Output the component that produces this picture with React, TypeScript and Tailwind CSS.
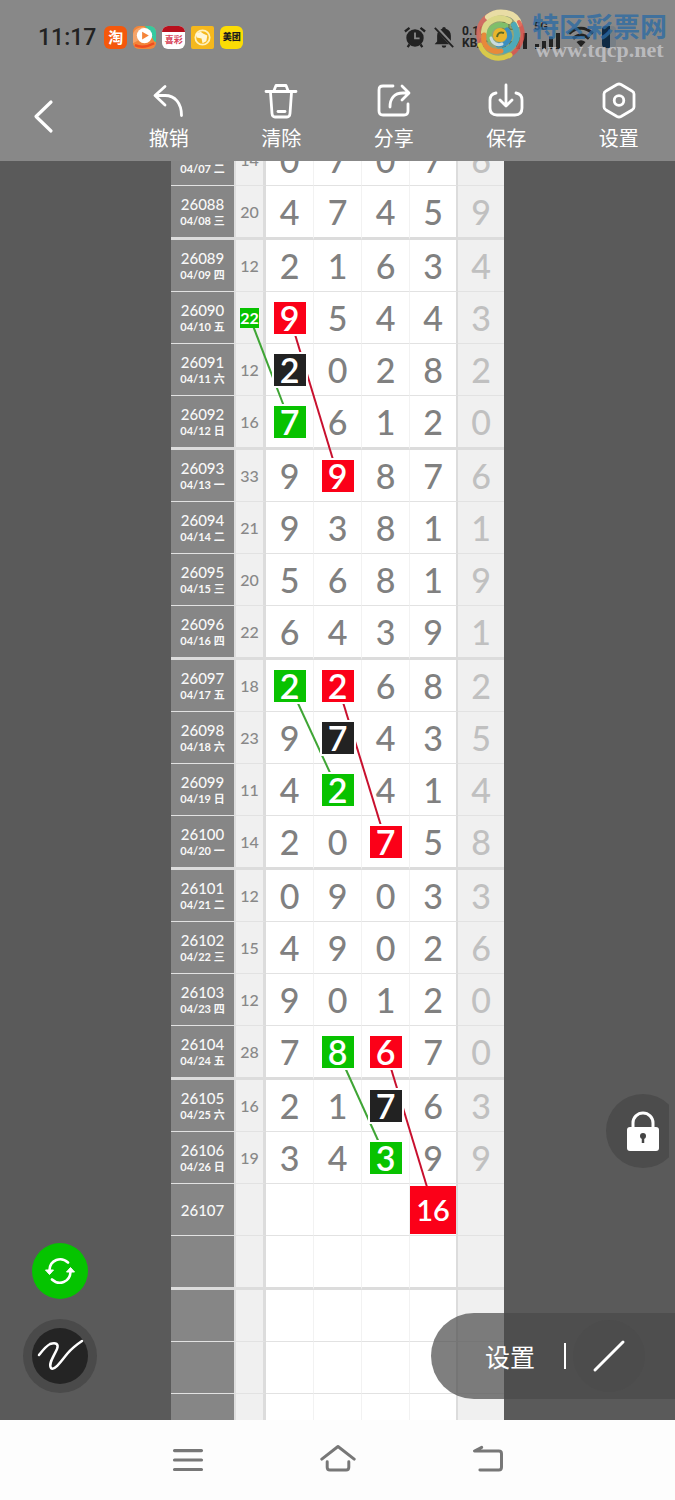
import type { ReactNode } from 'react'

type MarkColor = 'red' | 'green' | 'black'

interface Draw {
  issue: string
  date?: string
  sum?: string
  digits: string
}

const DRAWS: Draw[] = [
  { issue: '26087', date: '04/07 二', sum: '14', digits: '07076' },
  { issue: '26088', date: '04/08 三', sum: '20', digits: '47459' },
  { issue: '26089', date: '04/09 四', sum: '12', digits: '21634' },
  { issue: '26090', date: '04/10 五', sum: '22', digits: '95443' },
  { issue: '26091', date: '04/11 六', sum: '12', digits: '20282' },
  { issue: '26092', date: '04/12 日', sum: '16', digits: '76120' },
  { issue: '26093', date: '04/13 一', sum: '33', digits: '99876' },
  { issue: '26094', date: '04/14 二', sum: '21', digits: '93811' },
  { issue: '26095', date: '04/15 三', sum: '20', digits: '56819' },
  { issue: '26096', date: '04/16 四', sum: '22', digits: '64391' },
  { issue: '26097', date: '04/17 五', sum: '18', digits: '22682' },
  { issue: '26098', date: '04/18 六', sum: '23', digits: '97435' },
  { issue: '26099', date: '04/19 日', sum: '11', digits: '42414' },
  { issue: '26100', date: '04/20 一', sum: '14', digits: '20758' },
  { issue: '26101', date: '04/21 二', sum: '12', digits: '09033' },
  { issue: '26102', date: '04/22 三', sum: '15', digits: '49026' },
  { issue: '26103', date: '04/23 四', sum: '12', digits: '90120' },
  { issue: '26104', date: '04/24 五', sum: '28', digits: '78670' },
  { issue: '26105', date: '04/25 六', sum: '16', digits: '21763' },
  { issue: '26106', date: '04/26 日', sum: '19', digits: '34399' },
  { issue: '26107', digits: '' },
  { issue: '', digits: '' },
  { issue: '', digits: '' },
  { issue: '', digits: '' },
  { issue: '', digits: '' },
]

// key: row-column, column -1 is the sum
const MARKS: Record<string, MarkColor> = {
  '3--1': 'green',
  '3-0': 'red',
  '4-0': 'black',
  '5-0': 'green',
  '6-1': 'red',
  '10-0': 'green',
  '10-1': 'red',
  '11-1': 'black',
  '12-1': 'green',
  '13-2': 'red',
  '17-1': 'green',
  '17-2': 'red',
  '18-2': 'black',
  '19-2': 'green',
}

const MARK_BG: Record<MarkColor, string> = {
  red: 'bg-[#fb0018]',
  green: 'bg-[#08c200]',
  black: 'bg-[#222222]',
}

// [row, column] -> [row, column]
const LINKS: { from: [number, number]; to: [number, number]; color: string }[] = [
  { from: [3, -1], to: [5, 0], color: '#3fa535' },
  { from: [3, 0], to: [6, 1], color: '#c8102e' },
  { from: [10, 0], to: [12, 1], color: '#3fa535' },
  { from: [10, 1], to: [13, 2], color: '#c8102e' },
  { from: [17, 1], to: [19, 2], color: '#3fa535' },
  { from: [17, 2], to: [20, 3], color: '#c8102e' },
]

const isGroupEnd = (row: number) => row % 4 === 1

function centerX(col: number) {
  return col < 0 ? 79 : 119 + col * 48
}

function centerY(row: number) {
  return row * 52 + Math.floor((row + 2) / 4) * 2 + 26
}

function DrawRow({ draw, row }: { draw: Draw; row: number }) {
  const end = isGroupEnd(row)
  const line = end ? 'border-b-3 border-b-[#dcdcdc]' : 'border-b border-b-[#e2e2e2]'
  const sumMark = MARKS[`${row}--1`]

  return (
    <tr className={end ? 'h-[54px]' : 'h-[52px]'}>
      <th
        scope="row"
        className={`border-r-2 border-r-[#dedede] bg-[#868686] p-0 text-center font-medium text-[#f8f8f8] ${line}`}
      >
        <div className="text-[15px] leading-[18px]">{draw.issue}</div>
        {draw.date && <div className="text-[11px] leading-4 font-bold whitespace-nowrap">{draw.date}</div>}
      </th>
      <td
        className={`border-r-3 border-r-[#dcdcdc] bg-[#f0f0f0] p-0 text-center text-base font-medium text-[#888888] ${line}`}
      >
        {sumMark ? (
          <span className={`relative z-10 inline-block h-5 leading-5 font-bold text-white ${MARK_BG[sumMark]}`}>
            {draw.sum}
          </span>
        ) : (
          draw.sum
        )}
      </td>
      {[0, 1, 2, 3].map((col) => {
        const mark = MARKS[`${row}-${col}`]
        const side = col === 3 ? 'border-r-2 border-r-[#dcdcdc]' : 'border-r border-r-[#f2f2f2]'
        return (
          <td
            key={col}
            className={`bg-white p-0 text-center text-[34px] leading-8 font-medium text-[#808080] ${side} ${line}`}
          >
            {row === 20 && col === 3 ? (
              <span className="relative z-10 mx-auto flex h-12 items-center justify-center bg-[#fb0018] text-[29px] font-semibold text-white">
                16
              </span>
            ) : mark ? (
              <span
                className={`relative z-10 mx-auto flex size-8 items-center justify-center font-semibold text-white ring-2 ring-white ${MARK_BG[mark]}`}
              >
                {draw.digits[col]}
              </span>
            ) : (
              draw.digits[col]
            )}
          </td>
        )
      })}
      <td className={`bg-[#f0f0f0] p-0 text-center text-[34px] leading-8 font-medium text-[#c0c0c0] ${line}`}>
        {draw.digits[4]}
      </td>
    </tr>
  )
}

function TrendChart() {
  return (
    <div className="relative mx-auto -mt-[27px] w-[333px] font-['Lato','Noto_Sans_CJK_SC',sans-serif]">
      <table className="w-full table-fixed border-separate border-spacing-0">
        <colgroup>
          <col className="w-[65px]" />
          <col className="w-[30px]" />
          <col className="w-12" />
          <col className="w-12" />
          <col className="w-12" />
          <col className="w-12" />
          <col />
        </colgroup>
        <tbody>
          {DRAWS.map((draw, row) => (
            <DrawRow key={row} draw={draw} row={row} />
          ))}
        </tbody>
      </table>
      <svg className="pointer-events-none absolute inset-0 size-full" aria-hidden="true">
        {LINKS.map(({ from, to, color }) => (
          <line
            key={from.join()}
            x1={centerX(from[1])}
            y1={centerY(from[0])}
            x2={centerX(to[1])}
            y2={centerY(to[0])}
            stroke={color}
            strokeWidth="2"
          />
        ))}
      </svg>
    </div>
  )
}

function Icon({ children, className = 'size-10' }: { children: ReactNode; className?: string }) {
  return (
    <svg
      viewBox="0 0 40 40"
      className={className}
      fill="none"
      stroke="currentColor"
      strokeWidth="2.8"
      strokeLinecap="round"
      strokeLinejoin="round"
      aria-hidden="true"
    >
      {children}
    </svg>
  )
}

const ACTIONS: { label: string; icon: ReactNode }[] = [
  {
    label: '撤销',
    icon: <path d="M16 6.500 L6 15.500 L16 25 M7 15.500 H16 C26 15.500 32.500 23 32.500 35.500" />,
  },
  {
    label: '清除',
    icon: (
      <>
        <path d="M5 11.500 H35 M13 10.500 L15 5.500 H25 L27 10.500 M9.500 12.500 L11 33.500 Q11.300 37 14 37 H26 Q28.700 37 29 33.500 L30.500 12.500" />
        <path d="M17 31.500 H24" />
      </>
    ),
  },
  {
    label: '分享',
    icon: (
      <>
        <path d="M19 6 H9 Q5 6 5 10 V31 Q5 35 9 35 H30 Q34 35 34 31 V24" />
        <path d="M28 6 L35 13 L28 20 M34 13 H29 C20 13 16 19 16 27" />
      </>
    ),
  },
  {
    label: '保存',
    icon: (
      <>
        <path d="M10 13 Q4 14 4 20 V28 Q4 35 11 35 H29 Q36 35 36 28 V20 Q36 14 30 13" />
        <path d="M20 5 V25 M14 20 L20 26 L26 20" />
      </>
    ),
  },
  {
    label: '设置',
    icon: (
      <>
        <path d="M18 4.500 Q20 3.500 22 4.500 L33 11 Q35 12 35 14 V27 Q35 29 33 30 L22 36.500 Q20 37.500 18 36.500 L7 30 Q5 29 5 27 V14 Q5 12 7 11 Z" />
        <circle cx="20" cy="20.500" r="4.800" />
      </>
    ),
  },
]

function AppBadges() {
  return (
    <div className="flex items-center gap-1.5" aria-hidden="true">
      <span className="flex size-[23px] items-center justify-center rounded-md bg-[#f4580c] text-[15px] font-bold text-white">
        淘
      </span>
      <svg viewBox="0 0 24 24" className="size-[23px]">
        <rect width="24" height="24" rx="6" fill="#f2853a" />
        <path d="M12 0h6a6 6 0 0 1 6 6v11c-5-2-3-9-12-17z" fill="#35c9a0" />
        <path d="M0 8C2 2 8 1 12 1L9 13 0 18z" fill="#f6a469" />
        <circle cx="12" cy="10" r="8" fill="#fff" />
        <path d="M9.500 6v8l7-4z" fill="#f5843a" />
        <path d="M2 20q9 4 20-2" stroke="#f04d20" strokeWidth="2.500" fill="none" />
      </svg>
      <span className="flex size-[23px] flex-col overflow-hidden rounded-md bg-white text-center text-[9px] leading-4 font-bold text-[#d8455a]">
        <span className="h-1.5 shrink-0 bg-[#b80f1c]" />
        喜彩
      </span>
      <svg viewBox="0 0 24 24" className="size-[23px]">
        <rect width="24" height="24" rx="2" fill="#f5b81d" />
        <circle cx="12" cy="12" r="7.500" fill="none" stroke="#fff1bd" strokeWidth="1.800" />
        <path d="M5 8l5-2 3 2 4 2-1 6-4 2-1-5-5-1z" fill="#fff7d8" />
      </svg>
      <span className="flex size-[23px] items-center justify-center rounded-md bg-[#fbdc05] text-[9px] font-black whitespace-nowrap text-[#1c1c1c]">
        美团
      </span>
    </div>
  )
}

function Signal() {
  return (
    <div className="relative h-6 w-[26px]">
      <span className="absolute -top-1 left-0 font-['Roboto',sans-serif] text-[11px] leading-3 font-bold">5G</span>
      <svg viewBox="0 0 26 24" className="size-full" fill="currentColor">
        <path d="M1 19h4v5H1zM8 16h4v8H8zM15 12h4v12h-4zM22 8h4v16h-4z" />
      </svg>
    </div>
  )
}

function StatusBar() {
  return (
    <div className="flex h-20 items-center pr-[59px] pb-1.5 pl-[38px] text-[#222222]">
      <span className="mr-2 font-['Roboto',sans-serif] text-[23px] leading-none font-medium">11:17</span>
      <AppBadges />
      <div className="ml-auto flex items-center gap-[7px]">
        <svg viewBox="0 0 24 24" className="size-[22px]" aria-hidden="true">
          <circle cx="12" cy="13" r="9.500" fill="currentColor" />
          <path d="M1 6l5-4M23 6l-5-4M6 20l-2 3M18 20l2 3" stroke="currentColor" strokeWidth="2.500" />
          <path d="M12 7v6.500h5" stroke="#888888" strokeWidth="2" fill="none" />
        </svg>
        <svg viewBox="0 0 24 24" className="size-[22px]" aria-hidden="true">
          <path
            d="M12 1a2 2 0 0 1 2 2c3.500 1 5.500 4 5.500 7.500V17l2.500 2.500v.5H2v-.5L4.500 17v-6.500C4.500 7 6.500 4 10 3a2 2 0 0 1 2-2zM9.500 21.200h5a2.500 2.500 0 0 1-5 0z"
            fill="currentColor"
          />
          <path d="M3 1l20 22" stroke="#888888" strokeWidth="4" />
          <path d="M2 2l20 21" stroke="currentColor" strokeWidth="2" />
        </svg>
        <span className="w-8 font-['Roboto',sans-serif] text-xs leading-3 font-bold">0.10 KB/s</span>
        <Signal />
        <Signal />
        <svg viewBox="0 0 28 22" className="h-[22px] w-7" aria-hidden="true">
          <path d="M2 7.500Q14-3 26 7.500M6 12.500q8-7 16 0" fill="none" stroke="currentColor" strokeWidth="3" />
          <path d="M9.500 16q4.500-3.500 9 0L14 21z" fill="currentColor" />
        </svg>
        <span className="h-[22px] w-3.5 rounded-sm border-l-8 border-[#0f2a44] bg-[#777f86]" />
      </div>
    </div>
  )
}

function Watermark() {
  return (
    <div className="absolute top-2 right-2 flex items-center gap-1" aria-hidden="true">
      <svg viewBox="0 0 56 56" className="size-14">
        <circle cx="28" cy="28" r="21" fill="#a3bd66" fillOpacity=".55" />
        <g fill="none" strokeLinecap="round">
          <path d="M8 34C2 14 18 2 34 5" stroke="#e0685a" strokeWidth="5" strokeOpacity=".8" />
          <path d="M16 9C26 1 44 4 47 16" stroke="#e9dda5" strokeWidth="6" />
          <path d="M12 24C13 12 27 7 37 13" stroke="#dcd98a" strokeWidth="6" />
          <path d="M47 14C56 28 47 45 32 50" stroke="#e2524a" strokeWidth="4" strokeOpacity=".8" />
          <path d="M42 17C50 31 40 43 27 43" stroke="#4fa9b8" strokeWidth="6" />
          <path d="M8 37C12 49 26 54 38 47" stroke="#d8c94a" strokeWidth="5" />
          <path d="M12 27C10 38 18 45 29 43" stroke="#e8893a" strokeWidth="5" />
          <path d="M18 32C14 21 24 14 34 18" stroke="#7fbf6a" strokeWidth="5" />
          <path d="M35 22C42 30 34 38 26 37" stroke="#3a8fc0" strokeWidth="5" />
          <path d="M19 30C20 35 25 38 30 36" stroke="#c9dbe0" strokeWidth="3" />
        </g>
        <circle cx="28" cy="27" r="7" fill="#e9b52c" />
        <path d="M25 29q1-6 7-4" stroke="#5a6a28" strokeWidth="2" fill="none" />
      </svg>
      <div className="flex flex-col items-center">
        <span className="text-[27px] leading-7 font-bold text-[#2d6ba3]/80">特区彩票网</span>
        <span className="font-['Liberation_Serif',serif] text-[22px] leading-5 font-bold text-[#c9c9cc]/80">
          www.tqcp.net
        </span>
      </div>
    </div>
  )
}

function Toolbar() {
  return (
    <nav className="grid grid-cols-6 items-center pb-[9px] text-white">
      <button type="button" aria-label="返回" className="flex justify-center pr-6">
        <Icon>
          <path d="M27 6 L12 20.500 L27 35" strokeWidth="3.200" />
        </Icon>
      </button>
      {ACTIONS.map(({ label, icon }) => (
        <button key={label} type="button" className="flex flex-col items-center gap-1">
          <Icon>{icon}</Icon>
          <span className="text-xl leading-7">{label}</span>
        </button>
      ))}
    </nav>
  )
}

function FloatingTools() {
  return (
    <>
      <div className="absolute right-1.5 bottom-[252px] w-[63px] overflow-hidden">
        <button
          type="button"
          aria-label="锁定"
          className="flex size-[74px] items-center justify-center rounded-full bg-[#4c4c4c] text-white"
        >
          <svg viewBox="0 0 34 40" className="h-10 w-[34px]" aria-hidden="true">
            <path d="M7 17V12a10 10 0 0 1 20 0v5" fill="none" stroke="currentColor" strokeWidth="3" />
            <rect x="1" y="16" width="32" height="24" rx="3" fill="currentColor" />
            <circle cx="17" cy="25" r="3" fill="#444444" />
            <path d="M17 26v6" stroke="#444444" strokeWidth="2.500" />
          </svg>
        </button>
      </div>

      <div className="absolute bottom-[27px] left-[23px] flex flex-col items-center gap-5">
        <button
          type="button"
          aria-label="切换"
          className="flex size-14 items-center justify-center rounded-full bg-[#05c400] text-white"
        >
          <svg viewBox="0 0 32 32" className="size-8" fill="none" stroke="currentColor" aria-hidden="true">
            <path d="M5.500 15C6 5 17 1 24 7.500M26.500 17C26 27 15 31 8 24.500" strokeWidth="2.600" strokeLinecap="round" />
            <path d="M1.500 15h8L5.500 19.500zM22.500 17h8L26.500 12.500z" fill="currentColor" strokeLinejoin="round" />
          </svg>
        </button>
        <button
          type="button"
          aria-label="画笔"
          className="flex size-[74px] items-center justify-center rounded-full bg-[#4a4a4a] text-white"
        >
          <span className="flex size-14 items-center justify-center rounded-full bg-[#242424]">
            <svg viewBox="0 0 48 40" className="h-10 w-12" fill="none" stroke="currentColor" aria-hidden="true">
              <path
                d="M3 19C7 14 10 10 14 8C20 6 23 8 21 13C18 20 12 28 15 32C18 35 24 27 31 18C36 12 40 9 46 5"
                strokeWidth="2.500"
                strokeLinecap="round"
              />
            </svg>
          </span>
        </button>
      </div>

      <div className="absolute right-0 bottom-[21px] flex h-[86px] items-center rounded-l-full bg-[#484848]/70 pr-[30px] pl-[54px] text-white">
        <button type="button" className="text-[25px] leading-8">
          设置
        </button>
        <span className="mx-[29px] h-[26px] w-0.5 bg-white" />
        <button
          type="button"
          aria-label="直线"
          className="-ml-[22px] flex size-[72px] items-center justify-center rounded-full bg-[#484848]/30"
        >
          <svg viewBox="0 0 34 34" className="size-[34px]" aria-hidden="true">
            <path d="M3 31L31 3" stroke="currentColor" strokeWidth="3" strokeLinecap="round" />
          </svg>
        </button>
      </div>
    </>
  )
}

function SystemNav() {
  return (
    <footer className="grid h-20 shrink-0 grid-cols-9 items-center bg-[#fdfdfd] text-[#777777]">
      <button type="button" aria-label="最近任务" className="col-start-3 flex justify-center">
        <Icon className="size-9">
          <path d="M5 9.500 H35 M5 20 H35 M5 30.500 H35" strokeWidth="3.500" />
        </Icon>
      </button>
      <button type="button" aria-label="主屏幕" className="col-start-5 flex justify-center">
        <Icon className="size-9">
          <path d="M2 19 L20 5 L38 19 M8 22 V28 Q8 31 11 31 H29 Q32 31 32 28 V22" strokeWidth="3.300" />
        </Icon>
      </button>
      <button type="button" aria-label="返回上一级" className="col-start-7 flex justify-center">
        <Icon className="size-9">
          <path d="M13 6 L5 10 H32 Q35 10 35 13 V28 Q35 31 32 31 H11" strokeWidth="3.300" />
        </Icon>
      </button>
    </footer>
  )
}

export default function App() {
  return (
    <div className="flex h-screen flex-col bg-[#5a5a5a] font-['Noto_Sans_CJK_SC',sans-serif]">
      <header className="relative shrink-0 bg-[#888888]">
        <StatusBar />
        <Toolbar />
        <Watermark />
      </header>
      <main className="relative min-h-0 flex-1">
        <div className="h-full overflow-hidden">
          <TrendChart />
        </div>
        <FloatingTools />
      </main>
      <SystemNav />
    </div>
  )
}
